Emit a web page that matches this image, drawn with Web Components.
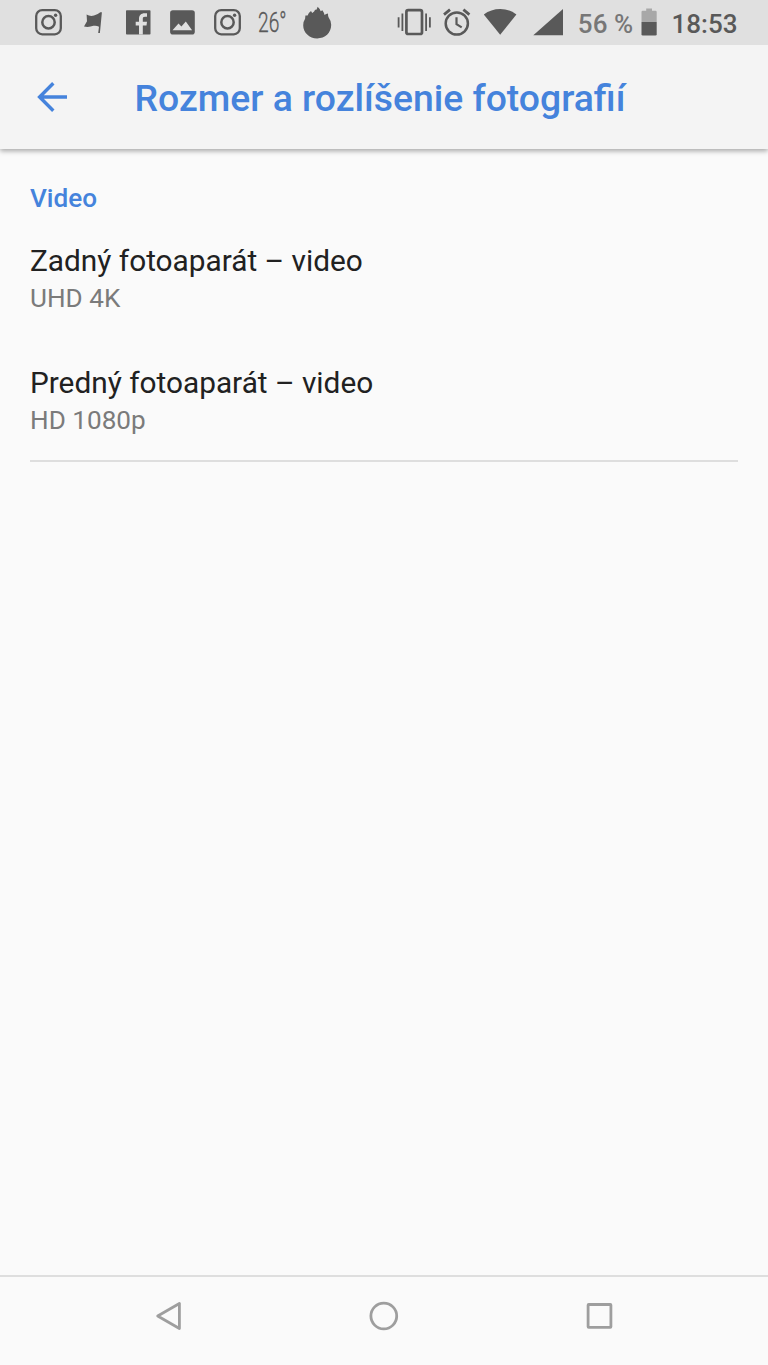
<!DOCTYPE html>
<html lang="sk">
<head>
<meta charset="utf-8">
<title>Rozmer a rozlíšenie fotografií</title>
<style>
html, body { margin: 0; height: 100%; }
body { font-family: Roboto, "Noto Sans", sans-serif; background: #fafafa; overflow: hidden; }
</style>
</head>
<body>
<camera-settings></camera-settings>
<script>
const define = (name, html) => {
  const template = document.createElement('template');
  template.innerHTML = html;
  customElements.define(name, class extends HTMLElement {
    constructor() {
      super();
      this.attachShadow({ mode: 'open' }).append(template.content.cloneNode(true));
    }
  });
};

const icons = {
  instagram: [45, 45, '<g fill="none" stroke="#595959" stroke-width="2.3"><rect x="10.2" y="10.1" width="24.6" height="24.2" rx="6"/><circle cx="22.5" cy="22.3" r="6.2" stroke-width="2.5"/></g><circle cx="29.6" cy="15.3" r="1.7" fill="#595959"/>'],
  flag: [45, 45, '<path fill="#595959" d="M15.6 14.6Q19 16.6 23 15.6Q26.5 14.6 29.3 12.2L30.9 12.2L28.9 33H27.2L28 26.8Q25.5 25.2 22.4 25.8Q18 27.6 13 26.6L16 21.2Z"/>'],
  facebook: [45, 45, '<rect x="10" y="10.2" width="24.5" height="24.4" rx=".8" fill="#595959"/><path fill="#e0e0e0" d="M23 34.6V25.4H19.7V21.8H23V19C23 15.3 25.2 13.2 28.5 13.2H31V16.7H29C27.2 16.7 26.8 17.5 26.8 18.9V21.8H31L30.5 25.4H26.8V34.6Z"/>'],
  image: [45, 45, '<rect x="10.1" y="10.2" width="24.7" height="24.4" rx="2.8" fill="#595959"/><path fill="#e0e0e0" d="M12.5 30.2L18.5 23.4L21.4 26.4L25.8 21.5L32.1 30.2Z"/>'],
  flame: [45, 45, '<path fill="#595959" d="M22.6 6.7C24.4 8.3 25.2 9.6 25.6 11.2L27.4 10.3Q29 12.5 29.5 15Q31 13.8 33 13.4Q32.8 16 33.8 17.8Q36.2 21 36.2 24.8C36.2 33 30 38.4 22.2 38.4C14.3 38.4 8.2 32.5 8.2 25.2Q8.2 21.6 10.1 18.8L10.4 15.6L12.6 15.4Q13.4 13 16 11.1L17.2 13Q19.6 11.6 20.1 9.8L21.4 9.8Q22.3 8.4 22.6 6.7Z"/>'],
  vibrate: [40, 45, '<g fill="none" stroke="#595959"><rect x="12.4" y="10.2" width="15.6" height="23.8" rx="1.8" stroke-width="2.7"/><path stroke-width="1.8" d="M4.6 17.2V27.5M8.4 13.5V31M32.1 13.5V31M35.9 17.2V27.5"/></g>'],
  alarm: [45, 45, '<g fill="none" stroke="#595959" stroke-width="2.5"><circle cx="22.8" cy="23.5" r="11.1"/><path stroke-width="2.2" d="M22.5 17.3V24.2L27.7 27.4"/><path stroke-width="2.8" d="M10 14.6L16 9.7M29.4 9.7L35.4 14.6"/></g>'],
  wifi: [45, 45, '<path fill="#595959" d="M21.2 34.8L4.8 14.5Q12 9 21.2 9T37.4 14.5Z"/>'],
  signal: [40, 45, '<path fill="#595959" d="M9.3 35.2L39 9V35.2Z"/>'],
  battery: [16, 45, '<path fill="#a8a8a8" d="M0.5 22V12Q.5 10.8 1.7 10.8H5.2V8.6H11V10.8H14.5Q15.7 10.8 15.7 12V22Z"/><path fill="#595959" d="M.5 22H15.7V34.3Q15.7 35.6 14.4 35.6H1.8Q.5 35.6 .5 34.3Z"/>'],
  arrow: [32, 32, '<path fill="none" stroke="#4583dc" stroke-width="3.4" d="M31 16H3.7M17.3 2.3L3.6 16L17.3 29.8"/>'],
  back: [32, 32, '<path fill="none" stroke="#9e9e9e" stroke-width="2.8" stroke-linejoin="round" d="M4.7 16L26.4 3.5V28.5Z"/>'],
  home: [32, 32, '<circle cx="15.8" cy="16" r="12.9" fill="none" stroke="#9e9e9e" stroke-width="2.8"/>'],
  recent: [32, 32, '<rect x="4.1" y="4.5" width="22.8" height="22.8" rx=".6" fill="none" stroke="#9e9e9e" stroke-width="2.8"/>']
};

customElements.define('ui-icon', class extends HTMLElement {
  connectedCallback() {
    if (this.shadowRoot) return;
    const [w, h, body] = icons[this.getAttribute('name')];
    this.attachShadow({ mode: 'open' }).innerHTML =
      `<style>:host{display:block;flex:none}svg{display:block}</style><svg width="${w}" height="${h}" viewBox="0 0 ${w} ${h}">${body}</svg>`;
  }
});

define('status-bar', `<style>
:host { display: flex; justify-content: space-between; height: 45px; background: #e0e0e0; color: #595959; font-size: 26px; font-weight: 500; line-height: 48px; overflow: hidden; }
.left { display: flex; padding-left: 26px; }
.left > * { margin-right: -.2px; }
.right { display: flex; padding-right: 30.5px; }
.temp { width: 45px; font-size: 27px; font-weight: 400; line-height: 47px; }
.temp span { display: block; width: 40px; margin-left: 8px; transform: scaleX(.71); transform-origin: 0 0; font-weight: 300; -webkit-text-stroke: .35px #595959; }
.percent { color: #777; margin: 0 8px 0 14px; white-space: nowrap; }
.clock { margin-left: 14.5px; }
</style>
<div class="left">
<ui-icon name="instagram"></ui-icon><ui-icon name="flag"></ui-icon><ui-icon name="facebook"></ui-icon><ui-icon name="image"></ui-icon><ui-icon name="instagram"></ui-icon><div class="temp"><span>26°</span></div><ui-icon name="flame"></ui-icon>
</div>
<div class="right">
<ui-icon name="vibrate"></ui-icon><ui-icon name="alarm"></ui-icon><ui-icon name="wifi"></ui-icon><ui-icon name="signal"></ui-icon><span class="percent">56 %</span><ui-icon name="battery"></ui-icon><span class="clock">18:53</span>
</div>`);

define('app-toolbar', `<style>
:host { display: flex; align-items: center; height: 104px; box-sizing: border-box; padding-left: 36px; background: #f4f4f4; color: #4583dc; box-shadow: 0 2px 5px rgba(0,0,0,.34); clip-path: inset(0 0 -12px 0); z-index: 1; }
h1 { margin: 2px 0 0 66.5px; font-size: 37.33px; font-weight: 500; line-height: 44px; white-space: nowrap; }
</style><ui-icon name="arrow"></ui-icon><h1><slot></slot></h1>`);

define('settings-group', `<style>
:host { display: block; margin: 0 30px; padding: 33px 0 22px; border-bottom: 2px solid #dedede; }
h2 { margin: 0; font-size: 26.13px; font-weight: 500; line-height: 32px; color: #4583dc; }
.items { display: flex; flex-direction: column; gap: 48px; margin-top: 28px; }
</style><h2><slot name="heading"></slot></h2><div class="items"><slot></slot></div>`);

define('settings-item', `<style>
:host { display: block; }
.title { font-size: 29.8px; line-height: 38px; color: #212121; }
.value { font-size: 26.13px; line-height: 36px; color: #7b7b7b; }
</style><div class="title"><slot></slot></div><div class="value"><slot name="value"></slot></div>`);

define('nav-bar', `<style>
:host { display: flex; justify-content: space-between; box-sizing: border-box; height: 90px; padding: 23px 152.5px 0; border-top: 2px solid #dedede; }
</style><ui-icon name="back"></ui-icon><ui-icon name="home"></ui-icon><ui-icon name="recent"></ui-icon>`);

define('camera-settings', `<style>
:host { display: flex; flex-direction: column; width: 768px; height: 1365px; background: #fafafa; }
main { flex: 1; }
</style>
<status-bar></status-bar>
<app-toolbar>Rozmer a rozlíšenie fotografií</app-toolbar>
<main><settings-group><span slot="heading">Video</span>
<settings-item>Zadný fotoaparát – video<span slot="value">UHD 4K</span></settings-item>
<settings-item>Predný fotoaparát – video<span slot="value">HD 1080p</span></settings-item>
</settings-group></main>
<nav-bar></nav-bar>`);
</script>
</body>
</html>
